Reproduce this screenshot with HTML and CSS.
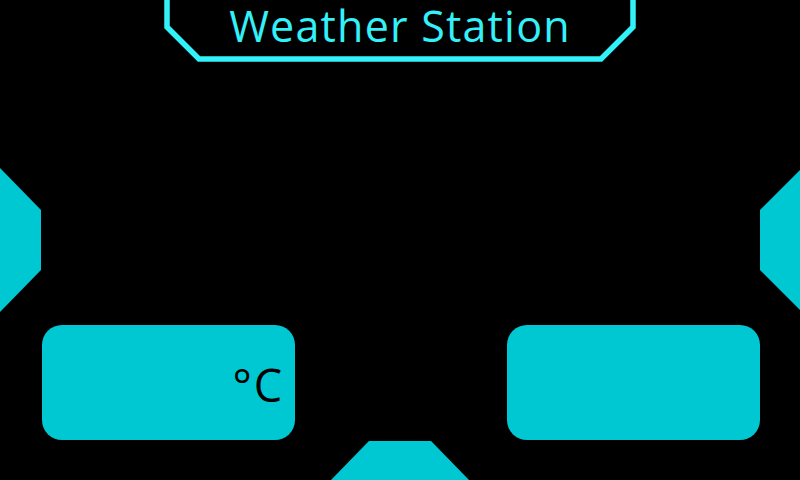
FILE: index.html
```html
<!DOCTYPE html>
<html lang="en">
<head>
<meta charset="utf-8">
<title>Weather Station</title>
<link rel="stylesheet" href="styles.css">
</head>
<body>
<main class="screen">
  <header class="title-bar">
    <svg class="title-frame" width="472" height="64" viewBox="0 0 472 64" aria-hidden="true">
      <polyline points="3,-6 3,27 35,59 437,59 469,27 469,-6" fill="none" stroke="#33f1f8" stroke-width="5.5" stroke-linejoin="miter"/>
    </svg>
    <h1 class="title">Weather Station</h1>
  </header>

  <section class="side-row">
    <div class="side-tab side-tab-left"></div>
    <div class="side-tab side-tab-right"></div>
  </section>

  <section class="card-row">
    <div class="card card-temp"><span class="unit">°C</span></div>
    <div class="card card-hum"></div>
  </section>

  <footer class="bottom-row">
    <div class="bottom-tab"></div>
  </footer>
</main>
</body>
</html>
```

FILE: styles.css
```css
* { box-sizing: border-box; }

html, body {
  margin: 0;
  padding: 0;
  background: #000;
}

.screen {
  width: 800px;
  height: 480px;
  overflow: hidden;
  display: flex;
  flex-direction: column;
  font-family: "Open Sans", "Noto Sans", sans-serif;
}

.title-bar {
  position: relative;
  width: 472px;
  height: 62px;
  margin: 0 auto;
  display: flex;
  justify-content: center;
}

.title-frame {
  position: absolute;
  left: 0;
  top: 0;
  overflow: visible;
}

.title {
  position: relative;
  margin: 0;
  padding-top: 1px;
  font-size: 43px;
  line-height: 50px;
  height: 52px;
  font-weight: 400;
  color: #33f1f8;
  letter-spacing: 1.2px;
  white-space: nowrap;
}

.side-row {
  margin-top: 106px;
  height: 144px;
  display: flex;
  justify-content: space-between;
}

.side-tab {
  background: #00c8d3;
  height: 144px;
}

.side-tab-left {
  width: 41px;
  clip-path: polygon(0 0, 100% 29.2%, 100% 70.8%, 0 100%);
}

.side-tab-right {
  width: 40px;
  clip-path: polygon(100% 1.4%, 0 29.2%, 0 70.8%, 100% 98.6%);
}

.card-row {
  margin-top: 13px;
  padding: 0 40px 0 42px;
  display: flex;
  justify-content: space-between;
}

.card {
  width: 253px;
  height: 115px;
  background: #00c8d3;
  border-radius: 20px;
}

.card-temp {
  display: flex;
  align-items: center;
  justify-content: flex-end;
  padding-right: 11px;
}

.unit {
  font-size: 45px;
  line-height: 1;
  color: #000;
  padding-top: 3px;
  letter-spacing: 2px;
}

.bottom-row {
  margin-top: 1px;
  display: flex;
  justify-content: center;
}

.bottom-tab {
  width: 138px;
  height: 39px;
  background: #00c8d3;
  clip-path: polygon(27.5% 0, 72.5% 0, 100% 100%, 0 100%);
}
```
